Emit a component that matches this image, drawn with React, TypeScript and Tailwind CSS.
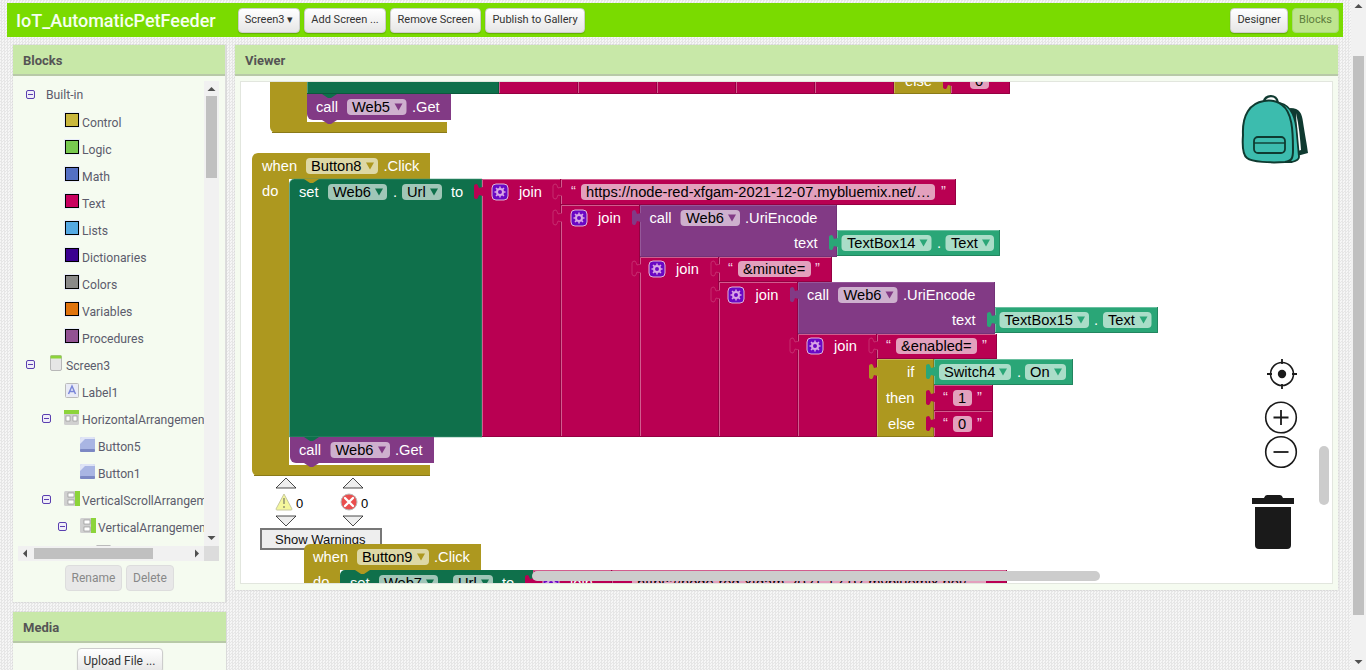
import type { ReactNode } from "react";

const OX = 241;
const OY = 82;

const C = {
  olive: { f: "#ad981f", l: "#c4b454", d: "#8a7a18", p: "#ddd8a5" },
  green: { f: "#0f704b", l: "#4b9a7c", d: "#0c593c", p: "#a0c6b7" },
  mag: { f: "#b90052", l: "#d25c8e", d: "#940042", p: "#e3a0bd" },
  pur: { f: "#823a85", l: "#95589a", d: "#733278", p: "#ceb0ce" },
  lg: { f: "#2aa677", l: "#6ac0a0", d: "#22855f", p: "#aaddc8" },
};
type Col = keyof typeof C;

function Blk({ x, y, w, h, c }: { x: number; y: number; w: number; h: number; c: Col }) {
  return (
    <g>
      <rect x={x} y={y} width={w} height={h} fill={C[c].f} />
      <path d={`M${x + 0.5} ${y + h} V${y + 0.5} H${x + w}`} stroke={C[c].l} fill="none" />
      <path d={`M${x} ${y + h - 0.5} H${x + w - 0.5} V${y}`} stroke={C[c].d} fill="none" />
    </g>
  );
}

// puzzle tab sticking out on the left of a block
function Tab({ x, y, c, edge }: { x: number; y: number; c: Col; edge?: boolean }) {
  const lobe = `M${x + 1} ${y + 3} l-4 1 q-1 -3 -2 -4 q-3 0 -3 2 v11 q0 2 3 2 q1 -1 2 -4 l4 1`;
  return (
    <g>
      <path d={`${lobe} z`} fill={C[c].f} />
      {edge && <path d={lobe} fill="none" stroke={C[c].l} strokeWidth={0.8} strokeOpacity={0.6} />}
    </g>
  );
}

function Notch({ x, y, c }: { x: number; y: number; c: Col }) {
  return <path d={`M${x} ${y} l6 4 h3 l6 -4 z`} fill={C[c].f} />;
}

function Pill({ x, y, w, c, arrow = true }: { x: number; y: number; w: number; c: Col; arrow?: boolean }) {
  const t = x + w - 8;
  return (
    <g>
      <rect x={x} y={y} width={w} height={16} rx={4} fill={C[c].p} />
      {arrow && <path d={`M${t - 4} ${y + 4.5} h8 l-4 7 z`} fill={C[c].f} />}
    </g>
  );
}

function JoinIcon({ x, y }: { x: number; y: number }) {
  const cx = x + 8;
  const cy = y + 8;
  return (
    <g>
      <rect x={x} y={y} width={16} height={16} rx={4} fill="#6a08c4" stroke="#e3b6d6" strokeWidth={1} />
      <circle cx={cx} cy={cy} r={3} fill="none" stroke="#d9a6e6" strokeWidth={2} />
      <path
        d={`M${cx} ${cy - 5.5} v2 M${cx} ${cy + 3.5} v2 M${cx - 5.5} ${cy} h2 M${cx + 3.5} ${cy} h2 M${cx - 4} ${cy - 4} l1.4 1.4 M${cx + 2.6} ${cy + 2.6} l1.4 1.4 M${cx - 4} ${cy + 4} l1.4 -1.4 M${cx + 2.6} ${cy - 2.6} l1.4 -1.4`}
        stroke="#d9a6e6"
        strokeWidth={1.5}
      />
    </g>
  );
}

// x, centre y, text, colour
type Lb = [number, number, string, string?];

function Labels({ items }: { items: Lb[] }) {
  return (
    <>
      {items.map(([x, cy, t, col], i) => (
        <span
          key={i}
          className="absolute h-[18px] whitespace-pre font-['Liberation_Sans',sans-serif] text-[14.67px] leading-[18px]"
          style={{ left: x - OX, top: cy - OY - 9, color: col ?? "#fff" }}
        >
          {t}
        </span>
      ))}
    </>
  );
}

function Layer({ children }: { children: ReactNode }) {
  return (
    <svg className="absolute left-0 top-0" width={1091} height={501} viewBox={`${OX} ${OY} 1091 501`}>
      {children}
    </svg>
  );
}

const K = "#000";
const Q = "#f3d5e3";

const labels1: Lb[] = [
  [905, 81, "else"],
  [960, 81, "“", Q],
  [975, 81, "0", K],
  [993, 81, "”", Q],
  [316, 107, "call"],
  [352, 107, "Web5", K],
  [412, 107, ".Get"],
  [262, 166, "when"],
  [311, 166, "Button8", K],
  [383.5, 166, ".Click"],
  [262, 191, "do"],
  [299, 192, "set"],
  [333, 192, "Web6", K],
  [393, 192, "."],
  [407, 192, "Url", K],
  [451, 192, "to"],
  [519, 192, "join"],
  [571, 191, "“", Q],
  [586, 192, "https://node-red-xfgam-2021-12-07.mybluemix.net/…", K],
  [941, 191, "”", Q],
  [598, 218, "join"],
  [649.5, 218, "call"],
  [686, 218, "Web6", K],
  [745, 218, ".UriEncode"],
  [794, 243, "text"],
  [847, 243, "TextBox14", K],
  [937, 243, "."],
  [951, 243, "Text", K],
  [676, 269, "join"],
  [728, 268, "“", Q],
  [743, 269, "&minute=", K],
  [815, 268, "”", Q],
  [755.5, 295, "join"],
  [807, 295, "call"],
  [843.5, 295, "Web6", K],
  [903, 295, ".UriEncode"],
  [952, 320, "text"],
  [1004.5, 320, "TextBox15", K],
  [1094, 320, "."],
  [1108, 320, "Text", K],
  [834, 346, "join"],
  [886, 345, "“", Q],
  [901, 346, "&enabled=", K],
  [982, 345, "”", Q],
  [907, 372, "if"],
  [944, 372, "Switch4", K],
  [1017, 372, "."],
  [1030, 372, "On", K],
  [886, 398, "then"],
  [888, 424, "else"],
  [943, 397, "“", Q],
  [958, 398, "1", K],
  [977, 397, "”", Q],
  [943, 423, "“", Q],
  [958, 424, "0", K],
  [977, 423, "”", Q],
  [299, 450, "call"],
  [335.5, 450, "Web6", K],
  [395, 450, ".Get"],
];

const labels3: Lb[] = [
  [313, 557, "when"],
  [362, 557, "Button9", K],
  [434, 557, ".Click"],
  [313, 582, "do"],
  [350, 583, "set"],
  [384, 583, "Web7", K],
  [444, 583, "."],
  [458, 583, "Url", K],
  [502, 583, "to"],
  [570, 583, "join"],
  [622, 582, "“", Q],
  [637, 583, "https://node-red-xfgam-2021-12-07.mybluemix.net/…", K],
  [992, 582, "”", Q],
];

function Blocks1() {
  return (
    <Layer>
      {/* partly scrolled block on top */}
      <path d="M270 82 V127 a6 6 0 0 0 6 6 H447 V122 H307 V82 Z" fill={C.olive.f} />
      <path d="M272 132.5 H447" stroke={C.olive.d} />
      <Blk x={307} y={70} w={192} h={24} c="green" />
      {[499, 578, 657, 736, 815].map((x) => (
        <Blk key={x} x={x} y={70} w={79} h={24} c="mag" />
      ))}
      <Blk x={894} y={70} w={57} h={24} c="olive" />
      <Blk x={951} y={70} w={59} h={24} c="mag" />
      <Tab x={951} y={74} c="mag" />
      <Pill x={970} y={73} w={19} c="mag" arrow={false} />
      <path d="M307 94 H451 V120 H313 a6 6 0 0 1 -6 -6 Z" fill={C.pur.f} />
      <Notch x={322} y={94} c="green" />
      <Notch x={322} y={120} c="pur" />
      <Pill x={347} y={99} w={59.5} c="pur" />

      {/* when Button8.Click */}
      <path
        d="M252 159 a6 6 0 0 1 6 -6 H430 V179 H289 V465 H430 V476 H258 a6 6 0 0 1 -6 -6 Z"
        fill={C.olive.f}
      />
      <path d="M254 475.5 H430" stroke={C.olive.d} />
      <path d="M289.5 184 a5 5 0 0 1 5 -5 H482 V437 H289.5 Z" fill={C.green.f} stroke={C.green.l} strokeWidth={0.6} />
      <Notch x={304} y={179} c="olive" />
      <Pill x={306} y={158} w={72} c="olive" />
      <Pill x={328} y={184} w={59} c="green" />
      <Pill x={402} y={184} w={40} c="green" />
      <path d="M290 437 H434 V463 H296 a6 6 0 0 1 -6 -6 Z" fill={C.pur.f} />
      <Notch x={304} y={437} c="green" />
      <Notch x={304} y={463} c="pur" />
      <Pill x={330.5} y={442} w={59.5} c="pur" />

      {/* nested joins */}
      <Blk x={482} y={179} w={79} h={258} c="mag" />
      <Tab x={482} y={184} c="mag" />
      <JoinIcon x={492} y={184} />
      <Blk x={561} y={179} w={395} h={26} c="mag" />
      <Tab x={561} y={184} c="mag" edge />
      <Pill x={581} y={184} w={354} c="mag" arrow={false} />
      <Blk x={561} y={205} w={79} h={232} c="mag" />
      <Tab x={561} y={210} c="mag" edge />
      <JoinIcon x={571} y={210} />
      <Blk x={640} y={205} w={197} h={52} c="pur" />
      <Tab x={640} y={210} c="pur" />
      <Pill x={680.5} y={210} w={59.5} c="pur" />
      <Blk x={837} y={230} w={163} h={26} c="lg" />
      <Tab x={837} y={235} c="lg" />
      <Pill x={841.5} y={235} w={90} c="lg" />
      <Pill x={945.5} y={235} w={48.5} c="lg" />

      <Blk x={640} y={257} w={79} h={180} c="mag" />
      <Tab x={640} y={261} c="mag" edge />
      <JoinIcon x={649} y={261} />
      <Blk x={719} y={257} w={113} h={25} c="mag" />
      <Tab x={719} y={261} c="mag" edge />
      <Pill x={738} y={261} w={73} c="mag" arrow={false} />
      <Blk x={719} y={282} w={79} h={155} c="mag" />
      <Tab x={719} y={287} c="mag" edge />
      <JoinIcon x={728} y={287} />
      <Blk x={798} y={282} w={197} h={52} c="pur" />
      <Tab x={798} y={287} c="pur" />
      <Pill x={838} y={287} w={59.5} c="pur" />
      <Blk x={995} y={307} w={163} h={26} c="lg" />
      <Tab x={995} y={312} c="lg" />
      <Pill x={999.5} y={312} w={89.5} c="lg" />
      <Pill x={1103} y={312} w={48.5} c="lg" />

      <Blk x={798} y={334} w={79} h={103} c="mag" />
      <Tab x={798} y={338} c="mag" edge />
      <JoinIcon x={807} y={338} />
      <Blk x={877} y={334} w={120} h={25} c="mag" />
      <Tab x={877} y={338} c="mag" edge />
      <Pill x={896} y={338} w={81} c="mag" arrow={false} />
      <Blk x={877} y={359} w={57} h={78} c="olive" />
      <Tab x={877} y={364} c="olive" />
      <Blk x={934} y={359} w={139} h={26} c="lg" />
      <Tab x={934} y={364} c="lg" />
      <Pill x={939} y={364} w={72} c="lg" />
      <Pill x={1025} y={364} w={41} c="lg" />
      <Blk x={934} y={385} w={59} h={26} c="mag" />
      <Tab x={934} y={390} c="mag" />
      <Pill x={953} y={390} w={19} c="mag" arrow={false} />
      <Blk x={934} y={411} w={59} h={26} c="mag" />
      <Tab x={934} y={416} c="mag" />
      <Pill x={953} y={416} w={19} c="mag" arrow={false} />

      {/* warning indicator */}
      <g fill="#eee" stroke="#000" strokeWidth={0.7}>
        <path d="M276 488 L286 478 L296 488 Z" />
        <path d="M276 516 L286 526 L296 516 Z" />
        <path d="M343 488 L353 478 L363 488 Z" />
        <path d="M343 516 L353 526 L363 516 Z" />
      </g>
      <path d="M284 494 L292 509 Q292 510 291 510 H277 Q276 510 276 509 Z" fill="#f4f79c" stroke="#c8c8a0" strokeWidth={1} />
      <path d="M284 498 V504 M284 506 V508" stroke="#8a8a70" strokeWidth={1.4} />
      <circle cx={349} cy={502} r={8} fill="#ea4e4e" stroke="#bbb" strokeWidth={1} />
      <path d="M345 498 L353 506 M353 498 L345 506" stroke="#fff" strokeWidth={2.4} strokeLinecap="round" />
      <rect x={261} y={529} width={120} height={20} fill="#eee" stroke="#777" strokeWidth={2} />
    </Layer>
  );
}

function Blocks3() {
  return (
    <Layer>
      <path d="M304 550 a6 6 0 0 1 6 -6 H481 V570 H340 V590 H304 Z" fill={C.olive.f} />
      <path d="M340 575 a5 5 0 0 1 5 -5 H533 V590 H340 Z" fill={C.green.f} />
      <Notch x={355} y={570} c="olive" />
      <Pill x={357} y={549} w={72} c="olive" />
      <Pill x={379} y={575} w={59} c="green" />
      <Pill x={453} y={575} w={40} c="green" />
      <Blk x={533} y={570} w={79} h={30} c="mag" />
      <Tab x={533} y={575} c="mag" />
      <JoinIcon x={543} y={575} />
      <Blk x={612} y={570} w={395} h={30} c="mag" />
      <Pill x={632} y={575} w={354} c="mag" arrow={false} />
    </Layer>
  );
}

function Tools() {
  return (
    <Layer>
      {/* backpack */}
      <path d="M1290 108 C1300 108 1302 114 1303 122 C1305 135 1307 145 1308 153 L1297 156 Z" fill="#0f3a30" />
      <path d="M1296 113 C1299 125 1300 138 1301 150 L1298 151 Z" fill="#fff" />
      <path d="M1264 102 C1264 95 1277 93 1278 103" fill="none" stroke="#0f3a30" strokeWidth={2.4} />
      <path
        d="M1280 103 C1292 106 1296 118 1297 135 L1299 157 C1299 160 1296 161 1292 162 L1283 162 Z"
        fill="#3cbcae"
        stroke="#0f3a30"
        strokeWidth={1.8}
      />
      <path
        d="M1264 101 C1250 103 1242 115 1243 135 C1242 148 1243 155 1247 158 C1252 162 1270 163 1285 162 C1292 161 1293 158 1293 150 C1293 130 1292 112 1282 105 C1277 101 1270 100 1264 101 Z"
        fill="#3cbcae"
        stroke="#0f3a30"
        strokeWidth={2}
      />
      <rect x={1254} y={137} width={31} height={16} rx={4} fill="#3cbcae" stroke="#0f3a30" strokeWidth={1.8} />
      <path d="M1254 143 H1285" stroke="#0f3a30" strokeWidth={1.4} />

      {/* target */}
      <circle cx={1282} cy={374} r={11.5} fill="#fff" stroke="#1a1a1a" strokeWidth={1.6} />
      <circle cx={1282} cy={374} r={4.2} fill="#1a1a1a" />
      <path d="M1282 359 v5 M1282 384 v5 M1267 374 h5 M1292 374 h5" stroke="#1a1a1a" strokeWidth={1.8} />

      {/* zoom */}
      <circle cx={1281} cy={417.5} r={15.3} fill="#fff" stroke="#1a1a1a" strokeWidth={1.6} />
      <path d="M1273.5 417.5 h15 M1281 410 v15" stroke="#1a1a1a" strokeWidth={1.8} />
      <circle cx={1281} cy={452} r={15.3} fill="#fff" stroke="#1a1a1a" strokeWidth={1.6} />
      <path d="M1273.5 452 h15" stroke="#1a1a1a" strokeWidth={1.8} />

      {/* trash */}
      <path d="M1252 498 H1264 Q1265 495 1267 495 H1280 Q1282 495 1283 498 H1294 V504 H1252 Z" fill="#1a1a1a" />
      <path d="M1255 507 H1291 V545 a4 4 0 0 1 -4 4 H1259 a4 4 0 0 1 -4 -4 Z" fill="#1a1a1a" />
    </Layer>
  );
}

function TopBtn({ children, active, w }: { children: ReactNode; active?: boolean; w: string }) {
  return (
    <div
      className={
        active
          ? `flex h-[25px] items-center justify-center rounded-[4px] border border-[#a8d878] bg-[#bfe58f] font-['Roboto',sans-serif] text-[11px] text-[#5c7c3c] ${w}`
          : `flex h-[25px] items-center justify-center rounded-[4px] border border-[#ccc] bg-gradient-to-b from-white to-[#e6e6e6] font-['Roboto',sans-serif] text-[11px] text-[#333] shadow-[0_1px_1px_rgba(0,0,0,0.2)] ${w}`
      }
    >
      {children}
    </div>
  );
}

function Swatch({ color }: { color: string }) {
  return <span className="-mt-[5px] mr-[3px] block h-[14px] w-[14px] shrink-0 border border-black shadow-[0_0_0_1px_#e8ecfa]" style={{ background: color }} />;
}

function Minus({ cls }: { cls: string }) {
  return (
    <span className={`-mt-[2px] flex h-[9px] w-[9px] shrink-0 items-center justify-center rounded-[2px] border border-[#5a3fb0] bg-[#f0eef8] ${cls}`}>
      <span className="block h-px w-[5px] bg-[#5a3fb0]" />
    </span>
  );
}

function BtnIcon() {
  return (
    <svg className="-mt-[5px] mr-[3px] shrink-0" width={15} height={15} viewBox="0 0 15 15">
      <rect x={0} y={0} width={15} height={15} rx={2} fill="#a9b5e3" />
      <path d="M0 2 a2 2 0 0 1 2 -2 H13 a2 2 0 0 1 2 2 H5 L0 7 Z" fill="#dfe4f6" />
      <rect x={0} y={12} width={15} height={3} rx={1} fill="#7c88c4" />
    </svg>
  );
}

function ArrIcon({ vertical }: { vertical?: boolean }) {
  return (
    <svg className="-mt-[5px] mr-[2px] shrink-0" width={16} height={15} viewBox="0 0 16 15">
      <rect x={0} y={0} width={15} height={15} rx={1.5} fill="#d0d0d0" />
      {vertical ? (
        <>
          <rect x={11} y={0} width={5} height={15} fill="#8cd43a" />
          <rect x={4} y={2} width={6} height={4} fill="#fff" stroke="#888" strokeWidth={0.6} />
          <rect x={4} y={9} width={6} height={4} fill="#fff" stroke="#888" strokeWidth={0.6} />
        </>
      ) : (
        <>
          <rect x={0} y={0} width={15} height={4} fill="#8cd43a" />
          <rect x={2} y={6} width={4} height={5} fill="#fff" stroke="#888" strokeWidth={0.6} />
          <rect x={9} y={6} width={4} height={5} fill="#fff" stroke="#888" strokeWidth={0.6} />
        </>
      )}
    </svg>
  );
}

const categories: [string, string][] = [
  ["Control", "#c9b73d"],
  ["Logic", "#78c94f"],
  ["Math", "#5470c4"],
  ["Text", "#c80060"],
  ["Lists", "#55a9e3"],
  ["Dictionaries", "#3b0091"],
  ["Colors", "#8a8a8a"],
  ["Variables", "#e0740e"],
  ["Procedures", "#925293"],
];

function Tree() {
  return (
    <div className="h-[465px] w-[186px] overflow-hidden pt-[1px] font-['Roboto',sans-serif] text-[12.2px] text-[#5c5c6c]">
      <div className="flex h-[27px] items-center pl-[8px]">
        <Minus cls="mr-[11px]" />
        <span>Built-in</span>
      </div>
      {categories.map(([name, color]) => (
        <div key={name} className="flex h-[27px] items-center pl-[47px]">
          <Swatch color={color} />
          <span className="mt-[1px]">{name}</span>
        </div>
      ))}
      <div className="flex h-[27px] items-center pl-[8px]">
        <Minus cls="mr-[15px]" />
        <svg className="-mt-[5px] mr-[4px] shrink-0" width={12} height={16} viewBox="0 0 12 16">
          <rect x={0.5} y={0.5} width={11} height={15} rx={1.5} fill="#e6e6e6" stroke="#b8b8b8" />
          <rect x={0.5} y={0.5} width={11} height={3} fill="#8cd43a" />
        </svg>
        <span className="mt-[1px]">Screen3</span>
      </div>
      <div className="flex h-[27px] items-center pl-[47px]">
        <svg className="-mt-[5px] mr-[3px] shrink-0" width={14} height={15} viewBox="0 0 14 15">
          <rect x={0.5} y={0.5} width={13} height={14} rx={1} fill="#e9ebf6" stroke="#bbb" />
          <path d="M3.5 11 L7 3 L10.5 11 M4.8 8.5 H9.2" fill="none" stroke="#7a86d8" strokeWidth={1.5} />
        </svg>
        <span className="mt-[1px]">Label1</span>
      </div>
      <div className="flex h-[27px] items-center whitespace-nowrap pl-[24px]">
        <Minus cls="mr-[13px]" />
        <ArrIcon />
        <span className="mt-[1px]">HorizontalArrangement1</span>
      </div>
      <div className="flex h-[27px] items-center pl-[62px]">
        <BtnIcon />
        <span className="mt-[1px]">Button5</span>
      </div>
      <div className="flex h-[27px] items-center pl-[62px]">
        <BtnIcon />
        <span className="mt-[1px]">Button1</span>
      </div>
      <div className="flex h-[27px] items-center whitespace-nowrap pl-[24px]">
        <Minus cls="mr-[13px]" />
        <ArrIcon vertical />
        <span className="mt-[1px]">VerticalScrollArrangement1</span>
      </div>
      <div className="flex h-[27px] items-center whitespace-nowrap pl-[40px]">
        <Minus cls="mr-[13px]" />
        <ArrIcon vertical />
        <span className="mt-[1px]">VerticalArrangement1</span>
      </div>
      <div className="flex h-[27px] items-center pl-[78px]">
        <span className="-mt-[5px] block h-[15px] w-[15px] rounded-[1px] border border-[#bbb] bg-[#e9ebf6]" />
      </div>
    </div>
  );
}

function PanelHead({ children }: { children: ReactNode }) {
  return (
    <div className="flex h-[31px] items-center border-b-2 border-[#b8c9a8] bg-[#c8e8a8] px-[10px] pt-[2px] font-['Roboto',sans-serif] text-[13px] font-bold text-[#555]">
      {children}
    </div>
  );
}

function Arrow({ d }: { d: string }) {
  return (
    <svg width={9} height={9} viewBox="0 0 9 9">
      <path d={d} fill="#505050" />
    </svg>
  );
}

export default function App() {
  return (
    <div className="flex h-[670px] w-[1366px] overflow-hidden bg-[#f0f0f0] bg-[repeating-conic-gradient(#e6e6e6_0_25%,#f6f6f6_0_50%)] bg-[length:3px_3px]">
      <div className="w-[1351px] pl-[7px] pt-[3px]">
        {/* top bar */}
        <div className="flex h-[34px] w-[1336px] items-center bg-[#7adb00] pl-[9px] pr-[4px]">
          <div className="w-[222px] font-['Roboto',sans-serif] text-[18px] font-medium text-[#f6fff0]">IoT_AutomaticPetFeeder</div>
          <div className="flex gap-[4px]">
            <TopBtn w="w-[62px]">Screen3 ▾</TopBtn>
            <TopBtn w="w-[82px]">Add Screen ...</TopBtn>
            <TopBtn w="w-[91px]">Remove Screen</TopBtn>
            <TopBtn w="w-[100px]">Publish to Gallery</TopBtn>
          </div>
          <div className="ml-auto flex gap-[4px]">
            <TopBtn w="w-[58px]">Designer</TopBtn>
            <TopBtn w="w-[47px]" active>Blocks</TopBtn>
          </div>
        </div>

        <div className="mt-[8px] flex gap-[9px] pl-[6px]">
          {/* left column */}
          <div className="w-[213px]">
            <div className="h-[557px] border-r border-[#ddd] bg-[#f5fbf0] shadow-[0_0_1px_rgba(0,0,0,0.3)]">
              <PanelHead>Blocks</PanelHead>
              <div className="ml-[5px] mt-[5px] flex w-[201px] flex-col">
                <div className="flex">
                  <Tree />
                  <div className="flex h-[465px] w-[15px] flex-col items-center bg-[#f1f1f1] pt-[4px]">
                    <Arrow d="M0.5 6 L4.5 2 L8.5 6 Z" />
                    <div className="mt-[2px] h-[82px] w-[11px] bg-[#c0c0c0]" />
                    <div className="mt-auto pb-[4px]">
                      <Arrow d="M0.5 3 L4.5 7 L8.5 3 Z" />
                    </div>
                  </div>
                </div>
                <div className="flex h-[15px]">
                  <div className="flex h-[15px] w-[186px] items-center bg-[#f1f1f1] px-[3px]">
                    <Arrow d="M6 0.5 L2 4.5 L6 8.5 Z" />
                    <div className="ml-[4px] h-[11px] w-[119px] bg-[#c0c0c0]" />
                    <div className="ml-auto">
                      <Arrow d="M3 0.5 L7 4.5 L3 8.5 Z" />
                    </div>
                  </div>
                  <div className="w-[15px] bg-[#dcdcdc]" />
                </div>
                <div className="mt-[4px] flex gap-[4px] pl-[47px]">
                  <div className="flex h-[26px] w-[57px] items-center justify-center rounded-[4px] border border-[#ddd] bg-[#e8e8e8] font-['Roboto',sans-serif] text-[12px] text-[#888]">Rename</div>
                  <div className="flex h-[26px] w-[48px] items-center justify-center rounded-[4px] border border-[#ddd] bg-[#e8e8e8] font-['Roboto',sans-serif] text-[12px] text-[#888]">Delete</div>
                </div>
              </div>
            </div>
            <div className="mt-[10px] h-[80px] bg-[#f5fbf0] shadow-[0_0_1px_rgba(0,0,0,0.3)]">
              <PanelHead>Media</PanelHead>
              <div className="mt-[5px] flex justify-center">
                <div className="flex h-[25px] w-[86px] items-center justify-center rounded-[4px] border border-[#ccc] bg-gradient-to-b from-white to-[#e6e6e6] font-['Roboto',sans-serif] text-[12px] text-[#333] shadow-[0_1px_1px_rgba(0,0,0,0.2)]">
                  Upload File ...
                </div>
              </div>
            </div>
          </div>

          {/* viewer */}
          <div className="h-[545px] w-[1103px] bg-[#f5fbf0] shadow-[0_0_1px_rgba(0,0,0,0.3)]">
            <PanelHead>Viewer</PanelHead>
            <div className="relative ml-[6px] mt-[6px] h-[501px] w-[1091px] overflow-hidden bg-white outline outline-1 outline-[#e2e6de]">
              <Blocks1 />
              <Labels items={labels1} />
              <span className="absolute left-[34px] top-[449px] font-['Liberation_Sans',sans-serif] text-[13px] leading-[18px] text-[#111]">
                Show Warnings
              </span>
              <span className="absolute left-[55px] top-[413px] font-['Liberation_Sans',sans-serif] text-[13px] leading-[18px] text-black">0</span>
              <span className="absolute left-[120px] top-[413px] font-['Liberation_Sans',sans-serif] text-[13px] leading-[18px] text-black">0</span>
              <Blocks3 />
              <Labels items={labels3} />
              <Tools />
              <div className="absolute left-[291px] top-[489px] h-[10px] w-[568px] rounded-[5px] bg-[#ccc]" />
              <div className="absolute left-[1078px] top-[364px] h-[59px] w-[10px] rounded-[5px] bg-[#ccc]" />
            </div>
          </div>
        </div>
      </div>

      {/* page scrollbar */}
      <div className="flex h-[670px] w-[15px] flex-col items-center bg-[#f1f1f1] pt-[2px]">
        <Arrow d="M0.5 6 L4.5 2 L8.5 6 Z" />
        <div className="mt-[45px] h-[559px] w-[11px] bg-[#c0c0c0]" />
        <div className="mt-auto pb-[4px]">
          <Arrow d="M0.5 3 L4.5 7 L8.5 3 Z" />
        </div>
      </div>
    </div>
  );
}
